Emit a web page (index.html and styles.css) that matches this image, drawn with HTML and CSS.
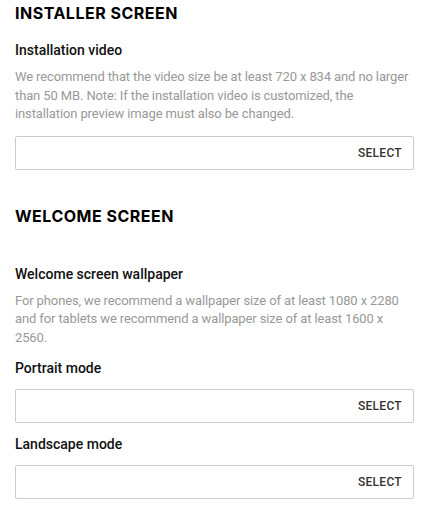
FILE: index.html
```html
<!DOCTYPE html>
<html>
<head>
<meta charset="utf-8">
<link rel="stylesheet" href="styles.css">
</head>
<body>
<div class="page">
  <section class="section">
    <h2 class="section-title">INSTALLER SCREEN</h2>
    <h3 class="label first">Installation video</h3>
    <p class="desc">We recommend that the video size be at least 720 x 834 and no larger than 50 MB. Note: If the installation video is customized, the installation preview image must also be changed.</p>
    <div class="picker"><span class="picker-btn">SELECT</span></div>
  </section>
  <section class="section second">
    <h2 class="section-title">WELCOME SCREEN</h2>
    <h3 class="label spaced">Welcome screen wallpaper</h3>
    <p class="desc">For phones, we recommend a wallpaper size of at least 1080 x 2280 and for tablets we recommend a wallpaper size of at least 1600 x 2560.</p>
    <h3 class="label">Portrait mode</h3>
    <div class="picker"><span class="picker-btn">SELECT</span></div>
    <h3 class="label">Landscape mode</h3>
    <div class="picker"><span class="picker-btn">SELECT</span></div>
  </section>
</div>
</body>
</html>
```

FILE: styles.css
```css
html, body {
  margin: 0;
  padding: 0;
  background: #fff;
}
.page {
  padding: 0 13px 0 15px;
  font-family: Roboto, sans-serif;
  color: #111;
}
.section-title {
  margin: 0;
  padding-top: 3px;
  font-family: Inter, sans-serif;
  font-weight: 700;
  font-size: 16px;
  line-height: 20px;
  letter-spacing: 0.5px;
  color: #000;
}
.second .section-title {
  margin-top: 33px;
}
.label {
  margin: 11px 0 0;
  font-size: 14px;
  font-weight: 500;
  line-height: 20px;
  color: #111;
}
.label.first {
  margin-top: 17px;
}
.label.spaced {
  margin-top: 38px;
}
.desc {
  margin: 8px 0 0;
  font-size: 13px;
  line-height: 18.5px;
  letter-spacing: -0.12px;
  color: #999;
}
.picker {
  margin-top: 12px;
  height: 32px;
  border: 1px solid #ccc;
  border-radius: 2px;
  display: flex;
  align-items: center;
  justify-content: flex-end;
  padding-right: 11px;
}
.label + .picker {
  margin-top: 11px;
}
.picker-btn {
  font-size: 12px;
  font-weight: 500;
  color: #333;
  letter-spacing: 0.3px;
}
```
